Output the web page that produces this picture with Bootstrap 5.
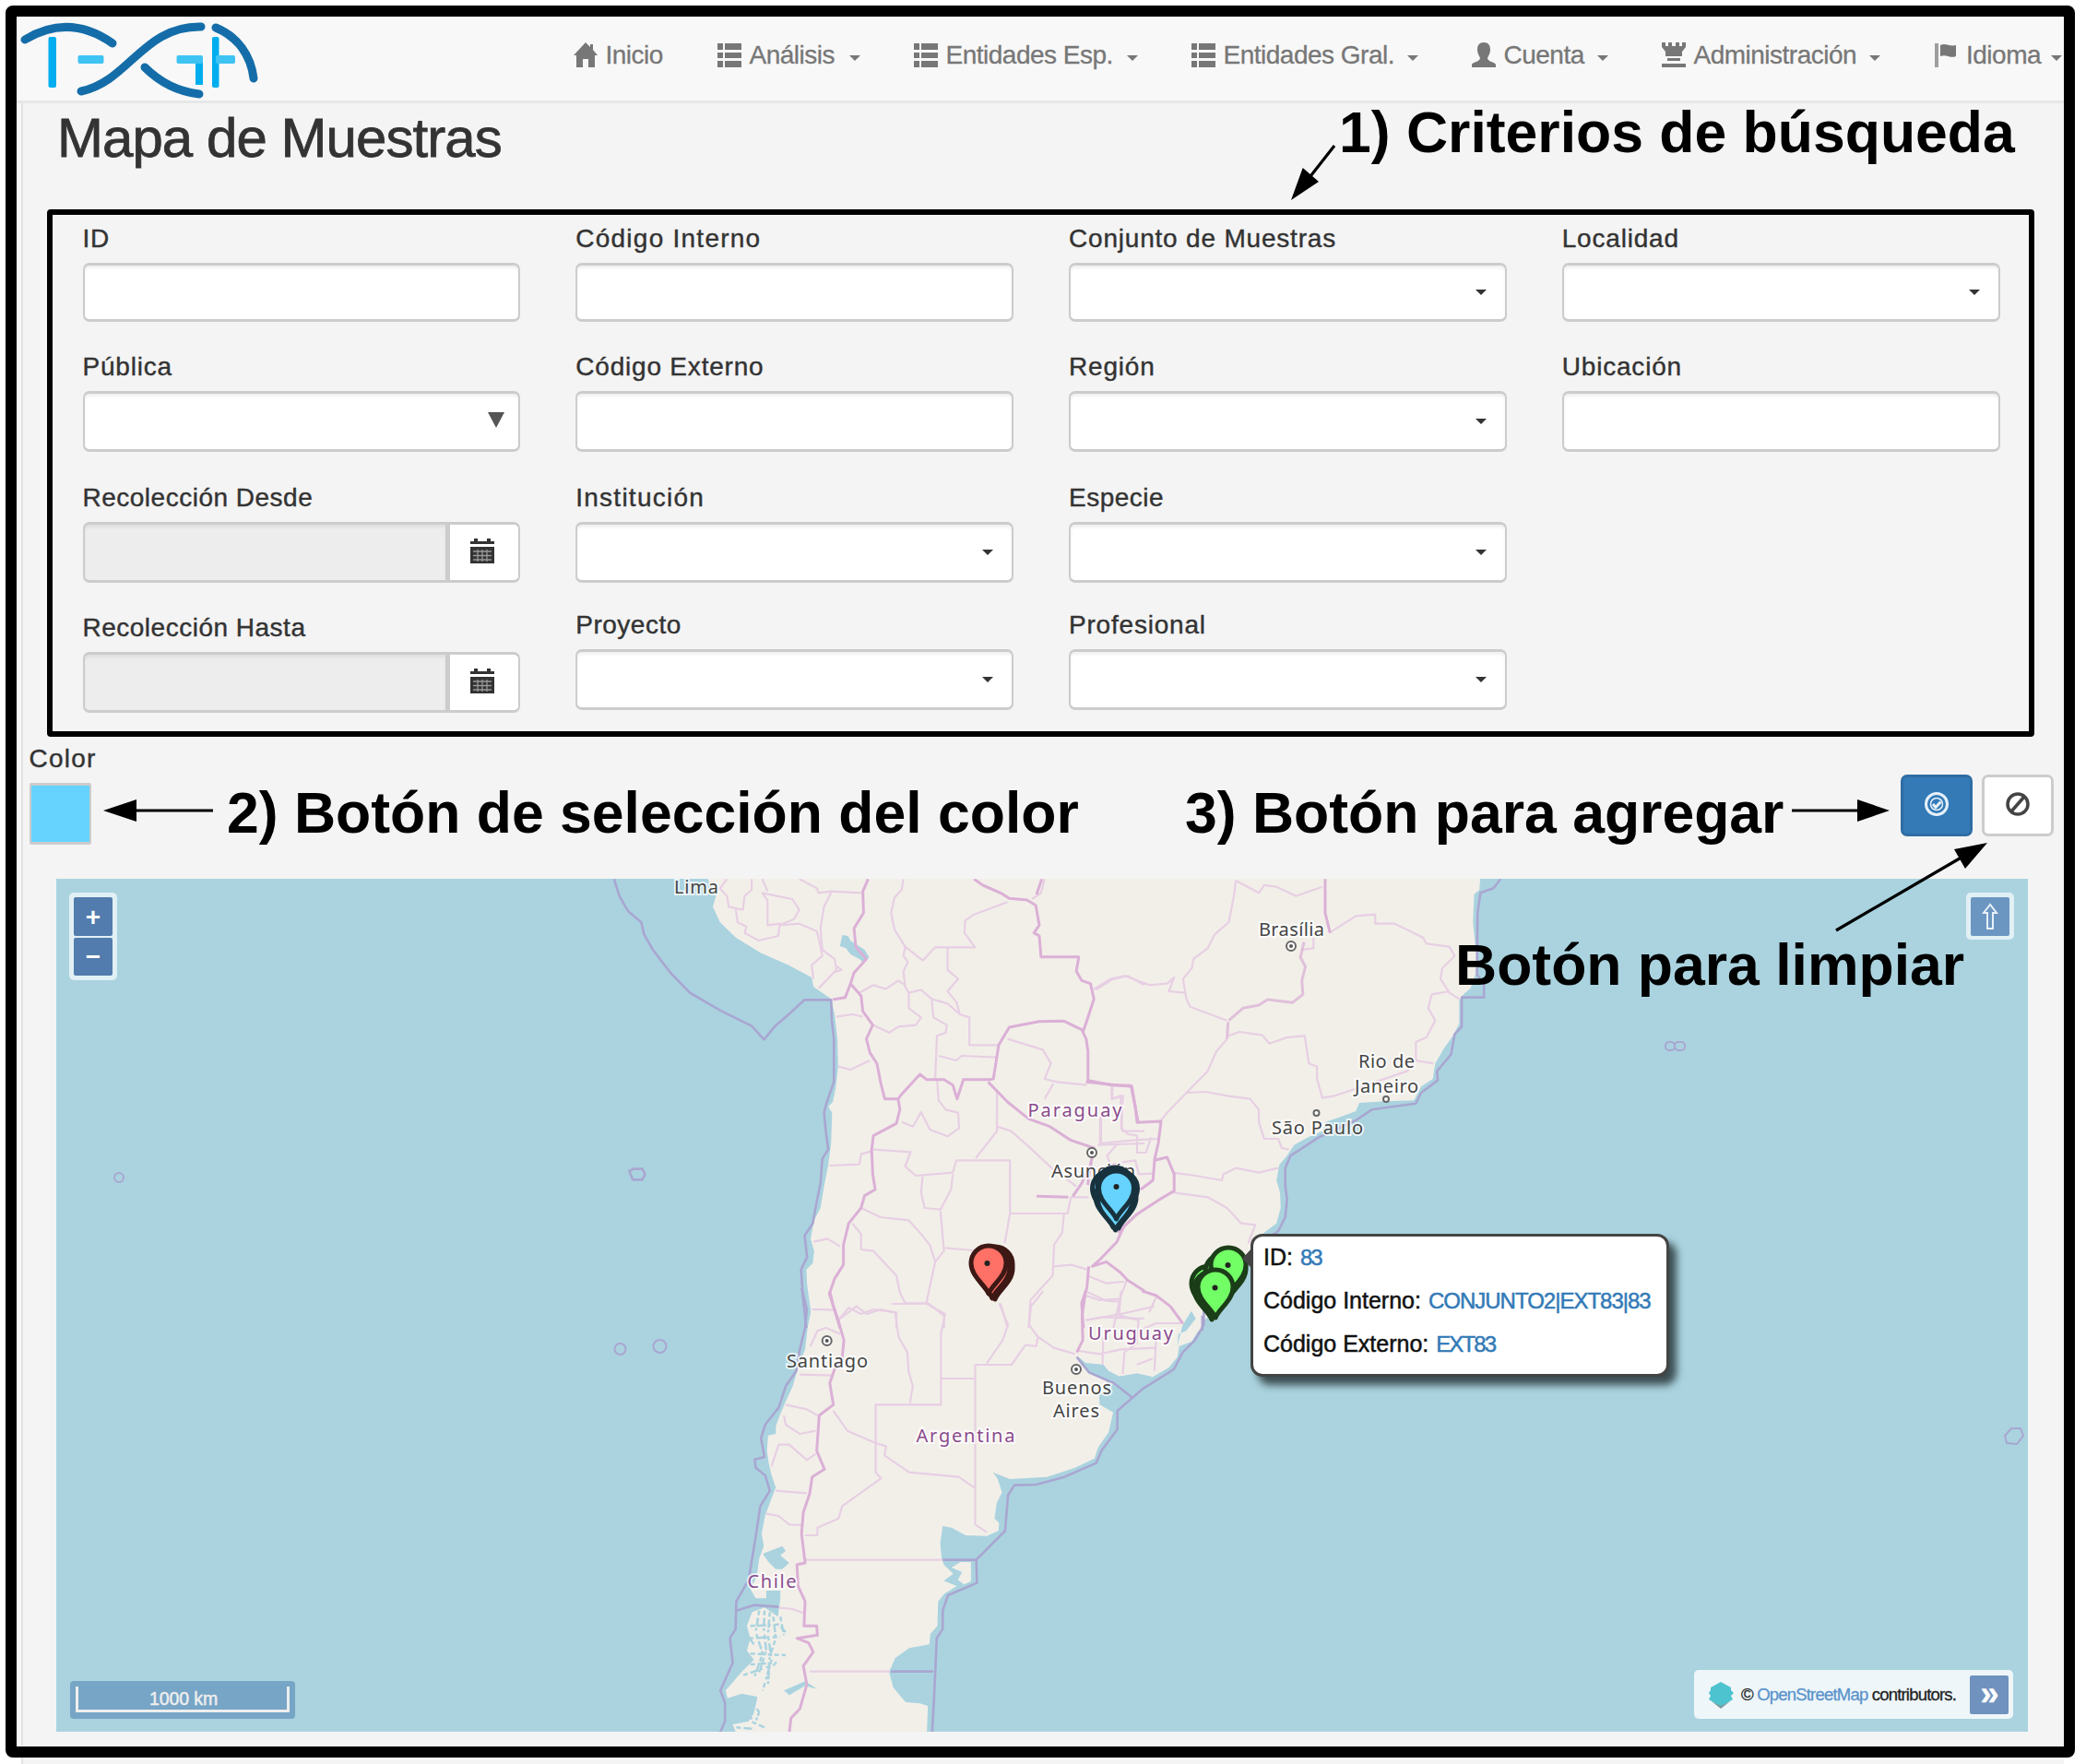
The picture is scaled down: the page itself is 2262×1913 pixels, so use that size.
<!DOCTYPE html>
<html lang="es">
<head>
<meta charset="utf-8">
<title>Mapa de Muestras</title>
<link href="https://cdn.jsdelivr.net/npm/bootstrap@5.3.0/dist/css/bootstrap.min.css" rel="stylesheet">
<style>
body{background:#fff;font-family:"Liberation Sans",Arial,sans-serif;color:#333;width:2262px;height:1913px;overflow:hidden}
.frame{margin:6px 12px 0 6px;width:2244px;height:1900px;border:12px solid #000;border-radius:8px;background:#f8f8f8;overflow:hidden}
.below{height:7px;margin:0 24px 0 23px;background:#f4f4f4;border-left:2px solid #e3e3e3}
.topnav{height:94px;background:#f8f8f8;border-bottom:3px solid #e7e7e7;padding:0 2px 0 0}
.topnav .nav-link{color:#777;font-size:28px;letter-spacing:-.5px;line-height:40px;white-space:nowrap;padding:0;-webkit-text-stroke:.3px #777}
.topnav ul{gap:58px;margin-top:-7px}
.topnav .glyph{width:26px;height:28px;fill:#777;margin-right:9px;flex:none}
.caretv{width:0;height:0;border:6px solid transparent;border-top-color:#777;border-bottom:0;margin-left:14px;margin-top:5px}
.t1{width:63px}.t2{width:94px}.t3{width:182px}.t4{width:185px}.t5{width:87px}.t6{width:176.5px}.t7{width:78px}
.well-box{margin-left:5px;height:1781px;background:#f4f4f4;border-left:2px solid #e3e3e3}
.page-title{font-size:60px;line-height:72px;letter-spacing:-.95px;height:114px;margin:0;padding:2px 0 0 37px;-webkit-text-stroke:.8px #333}
.criteria{margin:1px 32px 0 26px;height:572px;border:6px solid #000;border-radius:4px;padding:6px 0 0 2.5px}
.criteria .row{width:2139px}
.criteria [class*=col-]{padding:0 30px}
.form-label{font-size:28px;line-height:40px;letter-spacing:.8px;margin:0 0 6px;display:block;-webkit-text-stroke:.4px #333}
.form-label.tight{letter-spacing:.5px}
.form-label.wide{letter-spacing:1.25px}
.fieldset-1{height:139px}.fieldset-2{height:141.5px}.fieldset-3{height:138px}.c1 .fieldset-3{height:141.5px}
.form-control{height:66px;border:solid #ccc;border-width:3px 2px;border-radius:7px;padding:0;box-shadow:inset 0 3px 3px rgba(0,0,0,.06);background:#fff}
.fieldset-1 .form-control{height:64px}
.form-control:disabled{background:#ededed}
.picker{display:flex;align-items:center;justify-content:flex-end;padding-right:20px}
.picker i{border:6px solid transparent;border-top:6px solid #333;border-bottom:0}
.native i{border-width:17px 9px 0;border-top-color:#555}
.native{padding:0 15px 3px 0}
.input-group-text{width:80px;background:#fff;border:solid #ccc;border-width:3px 2px 3px 4px;border-radius:7px;justify-content:center;padding:0 4px 3px 0}
.actions{height:154px;padding:4px 11px 0 6.5px}
.swatch{width:67px;height:67px;background:#66d3ff;border:solid #ccc;border-width:3px 2px;border-radius:2px}
.adders{gap:10px;margin-top:37px}
.actions .btn{width:78px;height:67px;border-width:3px;border-radius:7px;padding:0 0 4px}
.btn-add{background:#337ab7;border-color:#2e6da4}
.btn-clear{background:#fff;border-color:#ccc}
.map{width:2138px;height:925px;margin-left:35.5px;background:#aad3df;overflow:hidden}
.map>svg{display:block}
.ctl{position:absolute;background:rgba(255,255,255,.65);border-radius:5px;padding:5px}
.ctl span,.ctl b{display:flex;align-items:center;justify-content:center;background:#527cae;color:#fff;width:42px;height:42px;border-radius:2px}
.zoomers{left:14.5px;top:15px;height:95px;width:52px;gap:2px;font:bold 28px "Liberation Sans",sans-serif}
.zoomers span{padding-top:2px}
.north{left:2071px;top:15px;width:52px;height:51px}
.ctl.north span{background:#6b96c2}
.scaleln{position:absolute;left:15px;top:870px;width:244px;height:41px;background:#76a5c6;border-radius:4px;padding:6px}
.scaleln div{height:28px;border:3px solid #eee;border-top:0;color:#eee;font-size:19.5px;line-height:26px;text-align:center;letter-spacing:-.1px;padding-left:3px;-webkit-text-stroke:.5px #eee}
.attrib{position:absolute;left:1776.5px;top:858px;width:346px;height:53px;background:rgba(255,255,255,.8);border-radius:5px;font-size:18.5px;letter-spacing:-.8px;white-space:nowrap;color:#222;padding:0 5px 0 15px;-webkit-text-stroke:.3px}
.attrib .osm{color:#5b93cb;text-decoration:none}
.attrib b{width:42px;height:42px;background:#7092be;color:#fff;border-radius:2px;font-size:36px;line-height:40px;text-align:center}
.popup{position:absolute;left:1295.5px;top:384.5px;width:453.5px;height:155px;background:#fff;border:3px solid #444;border-radius:13px;box-shadow:8px 9px 8px 0 #3c4d52;padding:0 0 0 11px;font-size:25px;line-height:46.3px;color:#111;white-space:nowrap;-webkit-text-stroke:.5px}
.popup>div{margin-top:-.5px}
.popup .val{color:#337ab7;text-decoration:none;font-size:24px;letter-spacing:-1px;margin-left:1px}
.popup .val.tight{letter-spacing:-1.9px}
.note{position:absolute;font-weight:bold;font-size:62.5px;line-height:70px;color:#000;white-space:nowrap}
.arrows{position:absolute;left:0;top:0;pointer-events:none}
.mx *{vector-effect:non-scaling-stroke}
.mx path{fill:none;stroke-linejoin:round}
.mx .land{fill:#f2efe9}
.mx .sea{fill:#aad3df}
.mx .maj{stroke:#dbb0d6;stroke-width:3}
.mx .min{stroke:#e7cfe3;stroke-width:2.2}
.mx .mar{stroke:#a9a6d1;stroke-width:2.6}
.lb{font-family:"Noto Sans",sans-serif;font-size:20px;fill:#444;stroke:#fff;stroke-opacity:.75;stroke-width:4;paint-order:stroke}
.ct{fill:#8a4a8c}
</style>
<script src="https://cdn.jsdelivr.net/npm/bootstrap@5.3.0/dist/js/bootstrap.bundle.min.js"></script>
</head>
<body class="position-relative">
<svg width="0" height="0" class="position-absolute">
 <defs>
  <symbol id="i-list" viewBox="0 0 26 28"><path d="M0 1h6v7H0zM8 1h18v7H8zM0 11h6v6H0zM8 11h18v6H8zM0 20h6v7H0zM8 20h18v7H8z"/></symbol>
  <symbol id="i-home" viewBox="0 0 26 28"><path d="M13 0 0 14h3v13h7v-9h6v9h7V14h3L21 8V2h-3v3z"/></symbol>
  <symbol id="i-user" viewBox="0 0 26 28"><path d="M13 0c-5 0-7 3-7 8 0 4 2 6 3 9 0 4-8 4-9 7v3h26v-3c-1-3-9-3-9-7 1-3 3-5 3-9 0-5-2-8-7-8z"/></symbol>
  <symbol id="i-tower" viewBox="0 0 26 28"><path d="M0 0h4v4h3V0h4v4h4V0h4v4h3V0h4v5l-4 5v5H4v-5L0 5zM6 17h14v3H6zM0 23h26v4H0z"/></symbol>
  <symbol id="i-flag" viewBox="0 0 26 28"><path opacity=".7" d="M1 1h4v26H1z"/><path d="M7 3c6-3 10 2 17 0v12c-7 3-10-3-17 0z"/></symbol>
  <symbol id="i-cal" viewBox="0 0 26 27"><path d="M0 3h4V0h4v3h10V0h4v3h4v3H0z"/><path d="M0 9h26v18H0z"/><path d="M3 14h20M3 18.500h20M3 23h20M8 12v13M13 12v13M18 12v13" stroke="#999" stroke-width="1.300"/></symbol>
  <path id="pin" d="M0 0C-4 -10-19 -19-19 -33A19 19 0 0 1 19 -33C19 -19 4 -10 0 0Z" stroke-width="5" stroke-linejoin="round"/>
 </defs>
</svg>

<div class="frame">
 <nav class="navbar topnav d-flex flex-nowrap align-items-center">
  <svg width="270" height="91" viewBox="18 18 270 91" fill="none" stroke-linecap="round">
   <g fill="#00aeef"><rect x="52.500" y="40" width="8.500" height="55" rx="2"/><path d="M212 62h8v30h-8z"/><rect x="230" y="40" width="7.500" height="55" rx="2"/></g>
   <g fill="#3fc3f3"><rect x="84.500" y="60" width="28" height="9" rx="2"/><rect x="191.500" y="60" width="28.500" height="9" rx="2"/><rect x="234" y="60" width="21" height="9" rx="2"/></g>
   <g stroke="#146da8" stroke-width="9"><path d="M27 43Q75 14 122 47"/><path d="M88 99C140 88 155 28 218 29"/><path d="M157 73Q182 98 216 102"/><path d="M234 30C258 40 272 60 275 85"/></g>
  </svg>
  <ul class="navbar-nav flex-row ms-auto">
   <li class="nav-item"><a class="nav-link d-flex align-items-center"><svg class="glyph"><use href="#i-home"/></svg><span class="t1">Inicio</span></a></li>
   <li class="nav-item"><a class="nav-link d-flex align-items-center"><svg class="glyph"><use href="#i-list"/></svg><span class="t2">Análisis</span><i class="caretv"></i></a></li>
   <li class="nav-item"><a class="nav-link d-flex align-items-center"><svg class="glyph"><use href="#i-list"/></svg><span class="t3">Entidades Esp.</span><i class="caretv"></i></a></li>
   <li class="nav-item"><a class="nav-link d-flex align-items-center"><svg class="glyph"><use href="#i-list"/></svg><span class="t4">Entidades Gral.</span><i class="caretv"></i></a></li>
   <li class="nav-item"><a class="nav-link d-flex align-items-center"><svg class="glyph"><use href="#i-user"/></svg><span class="t5">Cuenta</span><i class="caretv"></i></a></li>
   <li class="nav-item"><a class="nav-link d-flex align-items-center"><svg class="glyph"><use href="#i-tower"/></svg><span class="t6">Administración</span><i class="caretv"></i></a></li>
   <li class="nav-item"><a class="nav-link d-flex align-items-center"><svg class="glyph"><use href="#i-flag"/></svg><span class="t7">Idioma</span><i class="caretv"></i></a></li>
  </ul>
 </nav>

 <main class="well-box">
  <h1 class="page-title fw-normal">Mapa de Muestras</h1>

  <section class="criteria">
   <div class="row g-0">
    <div class="col-3 c1">
     <div class="fieldset-1"><label class="form-label">ID</label><input class="form-control"></div>
     <div class="fieldset-2"><label class="form-label">Pública</label><div class="form-control picker native"><i></i></div></div>
     <div class="fieldset-3"><label class="form-label tight">Recolección Desde</label><div class="input-group flex-nowrap"><input class="form-control" disabled><span class="input-group-text"><svg width="26" height="27" fill="#333"><use href="#i-cal"/></svg></span></div></div>
     <div><label class="form-label tight">Recolección Hasta</label><div class="input-group flex-nowrap"><input class="form-control" disabled><span class="input-group-text"><svg width="26" height="27" fill="#333"><use href="#i-cal"/></svg></span></div></div>
    </div>
    <div class="col-3">
     <div class="fieldset-1"><label class="form-label wide">Código Interno</label><input class="form-control"></div>
     <div class="fieldset-2"><label class="form-label">Código Externo</label><input class="form-control"></div>
     <div class="fieldset-3"><label class="form-label wide">Institución</label><div class="form-control picker"><i></i></div></div>
     <div><label class="form-label tight">Proyecto</label><div class="form-control picker"><i></i></div></div>
    </div>
    <div class="col-3">
     <div class="fieldset-1"><label class="form-label">Conjunto de Muestras</label><div class="form-control picker"><i></i></div></div>
     <div class="fieldset-2"><label class="form-label">Región</label><div class="form-control picker"><i></i></div></div>
     <div class="fieldset-3"><label class="form-label tight">Especie</label><div class="form-control picker"><i></i></div></div>
     <div><label class="form-label">Profesional</label><div class="form-control picker"><i></i></div></div>
    </div>
    <div class="col-3">
     <div class="fieldset-1"><label class="form-label">Localidad</label><div class="form-control picker"><i></i></div></div>
     <div class="fieldset-2"><label class="form-label">Ubicación</label><input class="form-control"></div>
    </div>
   </div>
  </section>

  <section class="actions d-flex justify-content-between align-items-start">
   <div><label class="form-label wide">Color</label><div class="swatch"></div></div>
   <div class="adders d-flex">
    <button class="btn btn-primary btn-add"><svg width="28" height="28" viewBox="-14 -14 28 28" fill="none" stroke="#e6f0fa"><circle r="11.500" stroke-width="3"/><circle r="6.500" stroke-width="1.500"/><path d="M-4 0l3 3.500 5.500-6" stroke-width="3"/></svg></button>
    <button class="btn btn-clear"><svg width="28" height="28" viewBox="-14 -14 28 28" fill="none" stroke="#444" stroke-width="3.500"><circle r="11"/><path d="M-7 8 7 -8"/></svg></button>
   </div>
  </section>

  <section class="map position-relative">
   <svg width="2138" height="925" viewBox="60 953 2138 925">
    <g class="mx" transform="translate(640 940) scale(.38265 .33333)">
     <path class="land" d="M325 30 355 90 345 130 365 180 410 230 480 280 560 320 625 360 630 390 680 430 690 480 698 560 700 650 693 720 685 765 672 780 683 800 680 900 672 970 660 1040 650 1110 632 1150 622 1210 632 1250 628 1290 610 1310 612 1360 622 1440 622 1510H1560V30Z"/>
    </g>
    <g class="mx" transform="translate(1100 940) scale(.38265 .33333)">
     <path class="land" d="M0 30H1318L1315 75 1300 90 1297 180 1303 250 1310 330 1290 395 1270 415 1258 435 1258 510 1240 550 1215 590 1190 640 1183 690 1150 715 1130 760 1050 763 975 768 965 795 930 810 880 830 870 860 830 880 790 905 770 940 748 970 740 1020 750 1060 752 1110 740 1160 705 1190 690 1230 665 1260 650 1330 610 1400 560 1450 535 1475 528 1510H0Z"/>
    </g>
    <g class="mx" transform="translate(740 1400) scale(.38265 .33333)">
     <path class="land" d="M360 -10 363 60 352 120 345 190 325 250 310 310 290 360 275 400 262 440 262 465 240 470 237 520 242 560 250 600 262 640 245 690 232 730 222 790 228 830 215 870 208 930 190 970 205 1000 235 1000 235 975 275 975 275 1000 268 1060 230 1030 195 1045 180 1090 190 1130 180 1170 200 1200 165 1240 120 1300 125 1325 165 1310 210 1320 200 1370 185 1400 140 1410 150 1440H690L693 1350 670 1342 630 1338 595 1290 583 1240 600 1195 640 1162 697 1150 700 1115 720 1090 722 1010 740 985 775 960 738 943 765 920 738 890 732 870 728 820 735 765 760 770 800 795 860 797 893 780 895 755 882 740 888 690 903 655 890 610 877 590 925 612 1030 605 1110 575 1165 545 1175 510 1205 460 1218 395 1180 370 1178 340 1200 320 1200 290 1150 260 1120 215 1140 235 1190 240 1205 260 1235 278 1285 268 1330 280 1375 250 1400 215 1405 180 1440 165 1470 110 1475 -10Z"/>
     <path class="land" d="M760 900 785 882H815V945L795 955 778 940 790 915Z"/>
     <path class="sea" d="M225 855 280 830 290 845 275 860 300 885 280 905 262 905 240 880ZM150 1015H185V1025H150ZM1440 65 1452 90 1425 130 1403 140 1400 180 1415 110ZM1120 215 1140 235 1190 240 1205 262 1235 278 1290 270 1330 280 1280 345 1180 345 1190 320 1210 300 1150 262ZM285 1300 345 1270 380 1295 345 1285 300 1315Z"/>
     <path d="M215 1040 205 1110 225 1180 200 1260M230 1040 228 1100 235 1170 215 1240M245 1045 240 1120 250 1200 225 1300M255 1060 262 1130 245 1190 240 1280M190 1090 270 1085 290 1110M185 1130 275 1125M190 1180 290 1185M190 1215 265 1210M175 1110 200 1150M170 1250 260 1215M205 1330 190 1400 230 1420M195 1340 215 1370 205 1400M150 1420 200 1425M275 1060 285 1120" stroke="#aad3df" stroke-width="2.500" stroke-dasharray="5 3 9 2 3 4"/>
    </g>

    <!-- political borders -->
    <g class="mx" transform="translate(640 940) scale(.38265 .33333)">
     <path class="sea" d="M712 222 728 225 735 240 775 270 788 295 772 312 760 300 735 285 722 265 705 258Z"/>
     <path class="min" d="M385 40 365 70 385 95 390 130 430 140 435 95 455 75V40M410 140 415 180 440 195 435 215 475 240 530 225 535 185 500 190V110L485 85 525 95 570 105 590 140 575 170 535 190 590 185 640 210 650 260 655 290 625 320 630 365M590 40 640 70 645 85 680 80 765 85M680 85 660 130 650 200 655 270 690 300 695 335 645 395M690 320 710 335 685 345M485 40 500 80M885 40 880 75 860 100 850 150 860 205 890 260 940 305 975 262H1088L1058 215 1060 175 1085 155 1180 115M890 260 885 290 898 310 885 340 890 390 900 410 935 400 965 430 1010 445 1045 480 1072 490V580H1155M1010 262V335L1040 365 1010 405 1035 440 1045 480M760 410 800 385 835 398 870 370 890 385M900 410V460L935 490 920 515 870 520 845 540 800 515M965 430 970 490 1008 515 1005 540 980 550 975 690M985 615 1035 630 1050 615 1150 620M695 488 740 480 770 488M700 650 735 660 790 630M980 690 985 760 1005 790 1040 800 1043 850 1010 877 960 855 935 798 912 845 880 830M1150 730V860L1090 948M1150 845 1190 860 1240 910 1305 980 1375 1040M800 920 905 928 890 975 920 1005 1025 995 1035 955H1187V1128H1350L1360 1075H1410M1025 1000 1020 1050 990 1115 945 1110 935 1060 940 1000M990 1120 1000 1250 975 1285 950 1420M1003 1240 1085 1248M1187 1128 1172 1225M1340 1130 1335 1190 1312 1230 1308 1330 1245 1410 1240 1500M1310 1300 1360 1295 1405 1310M675 972 760 968 765 935 795 925M765 1110 820 1140 900 1150 935 1195 960 1230 975 1285M740 1160 765 1195V1245L800 1250 865 1330 875 1385 890 1420 955 1420 1000 1460V1500M630 1220 670 1210 705 1235M625 1440 670 1440M700 1475 730 1435 765 1455 800 1440 865 1450V1500M1160 1420 1180 1500M1180 560 1280 595 1303 640 1285 690 1320 700 1405 710M1310 705 1285 755M1430 400 1480 365 1520 355 1568 385M1285 40 1275 85 1250 105M1445 800V900M1435 905 1568 900M1475 715V755L1500 745 1505 860 1568 860M1405 1330 1460 1355 1510 1350M1400 1380 1460 1412 1500 1415M1405 1475 1450 1465 1568 1470M1520 1340 1500 1400 1480 1500"/>
     <path class="maj" d="M785 40 770 80 772 150 745 200 750 260 780 300 745 345 735 380 765 420 770 470 798 515 780 560 790 605 810 640 820 700 832 755H870L880 740 920 690 932 675 950 692H1000L1025 710 1037 755 1055 692H1130L1140 690 1155 580 1185 522 1270 503 1340 502 1390 530 1403 560 1408 600V695L1475 710 1530 712 1545 800 1550 830M870 755 875 790 865 835 800 875 795 920 798 1000 805 1050 775 1070 765 1110 730 1160 715 1230 715 1295 690 1340 675 1390 690 1440 705 1500M1085 40 1110 60 1160 85 1185 103 1235 108 1260 125 1270 190 1255 215 1270 225 1275 293H1382L1375 340 1390 370 1415 380 1425 430 1405 500 1393 540M1125 700 1180 765 1240 820 1300 845 1360 890 1425 915 1415 970 1390 1030 1365 1072M1510 1170 1490 1220 1440 1280 1420 1300 1460 1285 1500 1320 1520 1345 1568 1380M1410 1300 1405 1370 1390 1420 1395 1500M735 380 720 425 685 432"/>
     <path class="mar" d="M65 40 80 95 105 145 142 180 150 220 175 270 225 345 280 410 370 470 455 518 490 562 520 520 560 480 605 433H680L682 500 688 560V700L668 765 660 800 665 860 672 920 655 950 650 1030 640 1085 628 1160 605 1200 612 1270 595 1310 600 1400 610 1500M108 990 120 983H145L153 1000 145 1018H118Z"/>
    </g>
    <g class="mx" transform="translate(1100 940) scale(.38265 .33333)">
     <path class="min" d="M625 45 620 90 605 180 565 220 545 265 505 300 500 330 475 365 485 430 495 455 600 500M625 45 690 85 705 60 740 65 795 95 870 65M890 215 965 160 1020 155 1020 185 1075 185 1155 230 1165 250 1230 260 1245 290 1210 330 1205 365 1230 410 1258 430M1230 405 1180 415 1170 460 1190 500 1165 555 1135 570V630L1185 640M1130 640 1110 665 970 720 905 745 870 752 855 690V650L832 640 820 550 770 555 720 575 700 548 635 537 605 550M845 230V265L810 270M220 400 270 365 310 355 380 385 430 380 450 360 435 405 480 410M600 560 570 600 545 665 485 735 430 800 410 830M485 735 540 732 600 745 665 755 690 790V830L705 885 745 885 755 915 775 920M445 995 510 1005 585 1020 590 1000 625 980 690 995 745 980M450 1060 545 1075 600 1110 640 1160 680 1165 660 1225M240 815V900L330 890 405 885M275 715V755L305 745 300 850 320 870 345 875 345 930 370 930 385 880M290 900 260 940 270 970 310 960 340 955 350 1000 390 998"/>
     <path class="maj" d="M75 40 60 90M878 40V150L892 215M205 1035 215 960"/>
     <path class="maj" d="M603 505 600 560M605 500 645 460 690 450 715 432 785 442 815 415 812 370 822 325 808 295 818 245" stroke-opacity=".75"/>
     <path class="maj" d="M200 700 285 710 330 715 340 780 345 832 413 828 405 900 395 950 390 1020 355 1050M395 955 430 945 450 1000V1055L405 1085 345 1130 290 1190M60 1072 150 1075"/>
     <path class="mar" d="M1375 40 1355 70 1318 85 1310 150 1308 350 1328 380V425H1265V520L1245 545 1235 610 1195 665 1197 695 1150 735 1135 770 1010 790 965 825 860 880 780 940 765 980V1040L770 1080 765 1140 745 1185 700 1220M530 1460V1510"/>
    </g>
    <g class="mx" transform="translate(740 1400) scale(.38265 .33333)">
     <path class="min" d="M365 60 430 62M360 180 380 130 405 120 445 140M330 272 420 275M290 370 350 385 380 405M285 405 290 435 330 465 375 455M250 570 270 500 300 500 350 550 375 530M262 650 350 658M235 725 270 732 300 760 340 762M445 90 490 50 520 75 560 60 600 70 610 150 635 200 638 260 650 310 642 365M590 42H690L742 75 730 140V370H545V590L560 610 450 700 440 740 380 770V795H345M730 285H825M827 240V760L860 785M827 240H930L970 175 1000 180 1005 150 980 110 985 50 1020 0M895 40 920 110 905 160 860 235M1000 145 1050 185 1110 205M425 390 465 455 545 495 575 505 570 535 640 590 780 605 825 640M345 875H735M358 1238H585M270 1030 310 1035 340 1048M1140 15 1180 30 1240 25M1140 95 1240 75 1335 50M1120 195 1180 205 1240 190 1340 185M1240 0 1235 80 1290 95 1285 170 1250 200 1245 270M1190 150 1188 240M1340 20 1320 70M1290 130 1340 105 1420 105M1340 150 1335 260M1285 240 1330 220"/>
     <path class="maj" d="M415 0 425 50 440 100 455 160 450 220 430 250 415 300 425 370 385 405 378 520 400 580 365 605 358 660 340 720 335 790 345 885 322 890 325 960 345 1010 342 1090H378L380 1120 322 1130 355 1145 368 1175 340 1220 350 1280 330 1360 305 1390 300 1440M1140 0 1130 80 1132 160 1115 200M1300 0 1340 15 1380 50 1415 105"/>
     <path class="mar" d="M335 -10 350 60 345 120 330 190 320 260 290 310 270 380 232 435 220 480 230 540 202 548 205 575 232 600 245 650 218 700 205 800 185 940 150 1010 148 1100 132 1130 140 1210 105 1300 118 1340 118 1400 103 1440M150 1040 200 1022 270 1028M1475 -10 1475 110 1450 160 1415 200 1390 255 1300 320 1230 390V450L1185 520 1170 560 1080 605 1000 630 938 632 920 665 912 780 830 875 832 950 750 990 735 1040V1100L718 1130 712 1290 705 1440M735 875H828M588 1238H708M1115 215 1150 265 1220 300 1270 345"/>
    </g>
    <g fill="none" stroke="#a9a6d1" stroke-width="2">
     <circle cx="128" cy="1277" r="5"/><circle cx="671.500" cy="1463" r="6"/><circle cx="714.500" cy="1460" r="7"/><rect x="1805" y="1130" width="10" height="9" rx="4"/><rect x="1815" y="1130" width="11" height="9" rx="4"/><path d="M2173 1557 2180 1549 2190 1549 2193 1557 2186 1566 2175 1565Z"/>
    </g>
    <g fill="#fff" stroke="#666" stroke-width="2"><circle cx="1399" cy="1026" r="5"/><circle cx="1183" cy="1250" r="5"/><circle cx="895.700" cy="1454" r="5"/><circle cx="1166" cy="1485" r="5"/><circle cx="1502" cy="1192" r="3"/><circle cx="1426.500" cy="1207" r="3"/></g>
    <g fill="#555"><circle cx="1399" cy="1026" r="2"/><circle cx="1183" cy="1250" r="2"/><circle cx="895.700" cy="1454" r="2"/><circle cx="1166" cy="1485" r="2"/></g>
    <g class="lb">
     <text x="730" y="969" textLength="48">Lima</text><text x="1364" y="1015" textLength="71">Brasília</text><text x="1472" y="1158" textLength="61">Rio de</text><text x="1468" y="1185" textLength="69">Janeiro</text><text x="1378" y="1230" textLength="99">São Paulo</text><text x="1139" y="1277" textLength="91">Asunción</text><text x="852" y="1482.500" textLength="88">Santiago</text><text x="1129" y="1511.500" textLength="75">Buenos</text><text x="1141" y="1537" textLength="50">Aires</text>
     <text class="ct" x="1113.500" y="1210.500" textLength="102">Paraguay</text><text class="ct" x="1179" y="1452.500" textLength="92">Uruguay</text><text class="ct" x="992.500" y="1564" textLength="107">Argentina</text><text class="ct" x="809.500" y="1721.500" textLength="53">Chile</text>
    </g>
    <!-- sample pins -->
    <g fill="#66d3ff" stroke="#18323d"><use href="#pin" x="1202.500" y="1322"/><use href="#pin" x="1213.500" y="1322"/><use href="#pin" x="1208" y="1318"/><use href="#pin" x="1206" y="1331"/><use href="#pin" x="1212" y="1332"/><use href="#pin" x="1208.500" y="1334"/><use href="#pin" x="1209.500" y="1322"/></g>
    <g fill="#ff7066" stroke="#3d1815"><use href="#pin" x="1078" y="1404"/><use href="#pin" x="1078" y="1409"/><use href="#pin" x="1075" y="1408"/><use href="#pin" x="1071" y="1403"/></g>
    <g fill="#72ff66" stroke="#1b3d18"><use href="#pin" x="1310" y="1425"/><use href="#pin" x="1325" y="1412"/><use href="#pin" x="1331" y="1409"/><use href="#pin" x="1331" y="1405"/><use href="#pin" x="1313" y="1431"/><use href="#pin" x="1317" y="1429"/></g>
    <g fill="#222"><circle cx="1209.500" cy="1287" r="3"/><circle cx="1069.500" cy="1370" r="3"/><circle cx="1330.500" cy="1372" r="3"/><circle cx="1316.500" cy="1396.500" r="3"/></g>
    <path d="M1357 1353 1346 1365 1357 1376Z" fill="#444"/>
   </svg>
   <div class="ctl zoomers d-flex flex-column"><span>+</span><span>−</span></div>
   <div class="ctl north"><span><svg width="18" height="30" fill="none" stroke="#e8f1f8" stroke-width="2"><path d="M9 2 2 11h4v17h6V11h4z"/></svg></span></div>
   <div class="scaleln"><div>1000 km</div></div>
   <div class="attrib d-flex align-items-center">
    <svg width="28" height="30" viewBox="0 0 28 30" class="me-2"><path d="M14 1 25 7v3l3 3-3 3 2 4-5 3-8 5-8-5-5-3 2-4-2-3 2-3V7z" fill="#4cc3cf"/><path d="M4 22 14 27 24 22 14 30z" fill="#7d9a9e"/></svg>
    <span>© <span class="osm">OpenStreetMap</span> contributors.</span><b class="ms-auto">»</b>
   </div>
   <div class="popup"><div>ID: <span class="val tight">83</span></div><div>Código Interno: <span class="val">CONJUNTO2|EXT83|83</span></div><div>Código Externo: <span class="val tight">EXT83</span></div></div>
  </section>
 </main>
</div>
<div class="below"></div>

<!-- explanatory callouts laid over the page -->
<div class="note" style="left:1452px;top:107.500px">1) Criterios de búsqueda</div>
<div class="note" style="left:246px;top:846px">2) Botón de selección del color</div>
<div class="note" style="left:1285px;top:846px">3) Botón para agregar</div>
<div class="note" style="left:1578px;top:1011px">Botón para limpiar</div>
<svg class="arrows" width="2262" height="1100" stroke="#000" stroke-width="3.200">
 <path d="M1447 158 1418 195M231 879H140M1943 879H2020M1991 1009 2130 928"/>
 <path stroke="none" d="M1400 217 1412.700 182 1430 197ZM112 879 148 867V891ZM2049 879 2014 867V891ZM2155 914 2119 921 2131 942Z"/>
</svg>
</body>
</html>
